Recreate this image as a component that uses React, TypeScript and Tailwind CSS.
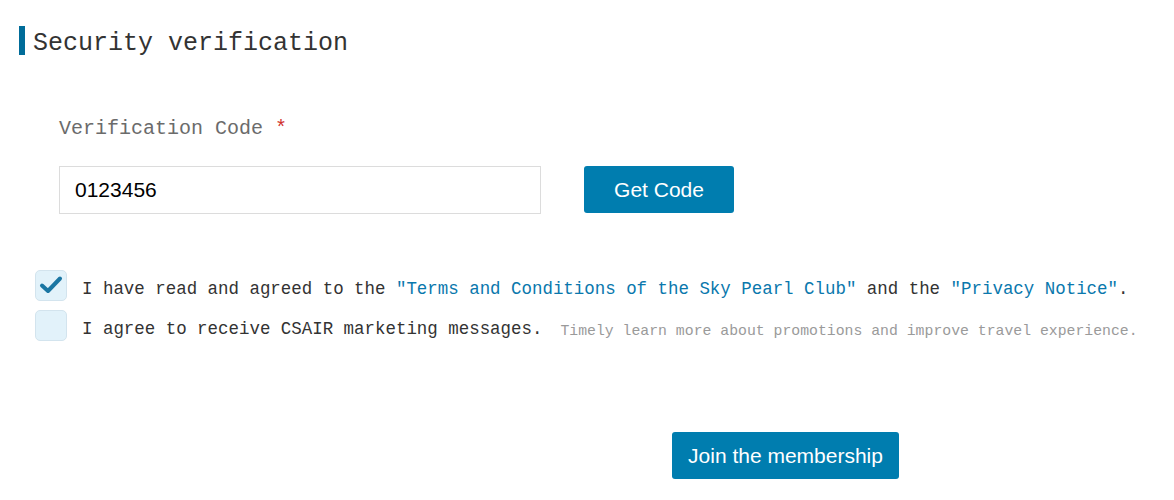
export default function App() {
  const mono = { fontFamily: '"Liberation Mono", "DejaVu Sans Mono", monospace' };
  const sans = { fontFamily: '"Liberation Sans", Arial, sans-serif' };

  return (
    <div className="min-h-[500px] w-[1174px] bg-white">
      {/* Title */}
      <div className="flex items-start pt-[26px] pl-[19px]">
        <div className="h-[29px] w-[6px] bg-[#006c99]" />
        <h1 style={mono} className="ml-[8px] mt-[3px] text-[25px] leading-[30px] text-[#333333]">
          Security verification
        </h1>
      </div>

      {/* Verification code */}
      <div className="pl-[59px]">
        <label style={mono} className="mt-[55px] block text-[20px] leading-[30px] text-[#6b6b6b]">
          Verification Code <span className="text-[#d0312d]">*</span>
        </label>
        <div className="mt-[22px] flex items-start">
          <input
            type="text"
            defaultValue="0123456"
            style={sans}
            className="h-[48px] w-[482px] border border-[#dcdcdc] bg-white pl-[15px] text-[21px] text-black outline-none"
          />
          <button
            style={sans}
            className="ml-[43px] h-[47px] w-[150px] rounded-[3px] bg-[#007daf] text-[21px] text-white"
          >
            Get Code
          </button>
        </div>
      </div>

      {/* Agreements */}
      <div className="mt-[55px] pl-[35px]">
        <div className="flex items-center">
          <div className="flex h-[31px] w-[32px] items-center justify-center rounded-[5px] border border-[#d3e4ee] bg-[#e2f2fa]">
            <svg width="24" height="20" viewBox="0 0 24 20" fill="none">
              <path d="M3 10.5 L9 16 L21 3.5" stroke="#1a76a3" strokeWidth="4" strokeLinecap="round" strokeLinejoin="round" />
            </svg>
          </div>
          <p style={mono} className="ml-[15px] mt-[8px] text-[17.45px] leading-[24px] text-[#333333]">
            I have read and agreed to the{' '}
            <span className="text-[#0a78ad]">″Terms and Conditions of the Sky Pearl Club″</span> and the{' '}
            <span className="text-[#0a78ad]">″Privacy Notice″</span>.
          </p>
        </div>
        <div className="mt-[8px] flex items-center">
          <div className="h-[31px] w-[32px] rounded-[5px] border border-[#d3e4ee] bg-[#e2f2fa]" />
          <p style={mono} className="ml-[15px] mt-[8px] text-[17.45px] leading-[24px] text-[#333333]">
            I agree to receive CSAIR marketing messages.
          </p>
          <span style={mono} className="ml-[18px] mt-[12px] text-[14.8px] leading-[20px] text-[#9a9a9a]">
            Timely learn more about promotions and improve travel experience.
          </span>
        </div>
      </div>

      {/* Submit */}
      <div className="mt-[91px] pl-[672px]">
        <button
          style={sans}
          className="h-[47px] w-[227px] rounded-[3px] bg-[#007daf] text-[21px] text-white"
        >
          Join the membership
        </button>
      </div>
    </div>
  );
}
